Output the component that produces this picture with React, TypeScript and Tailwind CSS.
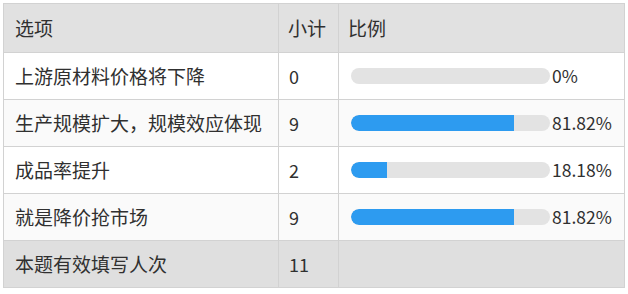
const rows = [
  { label: '上游原材料价格将下降', count: 0, percent: 0, text: '0%' },
  { label: '生产规模扩大，规模效应体现', count: 9, percent: 81.82, text: '81.82%' },
  { label: '成品率提升', count: 2, percent: 18.18, text: '18.18%' },
  { label: '就是降价抢市场', count: 9, percent: 81.82, text: '81.82%' },
]

const font = { fontFamily: '"Noto Sans CJK SC", "Noto Sans", sans-serif' }

function Bar({ percent, text }: { percent: number; text: string }) {
  return (
    <div className="flex items-center pl-3">
      <div className="h-4 w-[199px] overflow-hidden rounded-full bg-[#e3e3e3]">
        <div className="h-full rounded-l-full bg-[#2d9bf0]" style={{ width: `${percent}%` }} />
      </div>
      <span className="ml-[2px] text-[17.5px]">{text}</span>
    </div>
  )
}

export default function App() {
  return (
    <div className="h-[294px] w-[628px] bg-white pt-[3px] pl-[3px]" style={font}>
      <div className="grid w-[622px] grid-cols-[275px_60px_1fr] border-t border-l border-[#d2d2d2] text-[19px] text-[#303030]">
        <div className="flex h-[49px] items-center border-r border-b border-[#d2d2d2] bg-[#e1e1e1] pl-[11px]">选项</div>
        <div className="flex h-[49px] items-center border-r border-b border-[#d2d2d2] bg-[#e1e1e1] pl-[9px]">小计</div>
        <div className="flex h-[49px] items-center border-r border-b border-[#d2d2d2] bg-[#e1e1e1] pl-[9px]">比例</div>

        {rows.map((row, i) => (
          <div key={row.label} className="contents">
            <div className={`flex h-[47px] items-center border-r border-b border-[#d2d2d2] pl-[11px] ${i % 2 ? 'bg-[#fafafa]' : 'bg-white'}`}>
              {row.label}
            </div>
            <div className={`flex h-[47px] items-center border-r border-b border-[#d2d2d2] pl-[10px] text-[18px] ${i % 2 ? 'bg-[#fafafa]' : 'bg-white'}`}>
              {row.count}
            </div>
            <div className={`flex h-[47px] items-center border-r border-b border-[#d2d2d2] ${i % 2 ? 'bg-[#fafafa]' : 'bg-white'}`}>
              <Bar percent={row.percent} text={row.text} />
            </div>
          </div>
        ))}

        <div className="flex h-[47px] items-center border-r border-b border-[#d2d2d2] bg-[#dfdfdf] pl-[11px]">本题有效填写人次</div>
        <div className="flex h-[47px] items-center border-r border-b border-[#d2d2d2] bg-[#dfdfdf] pl-[10px] text-[18px]">11</div>
        <div className="h-[47px] border-r border-b border-[#d2d2d2] bg-[#dfdfdf]" />
      </div>
    </div>
  )
}
